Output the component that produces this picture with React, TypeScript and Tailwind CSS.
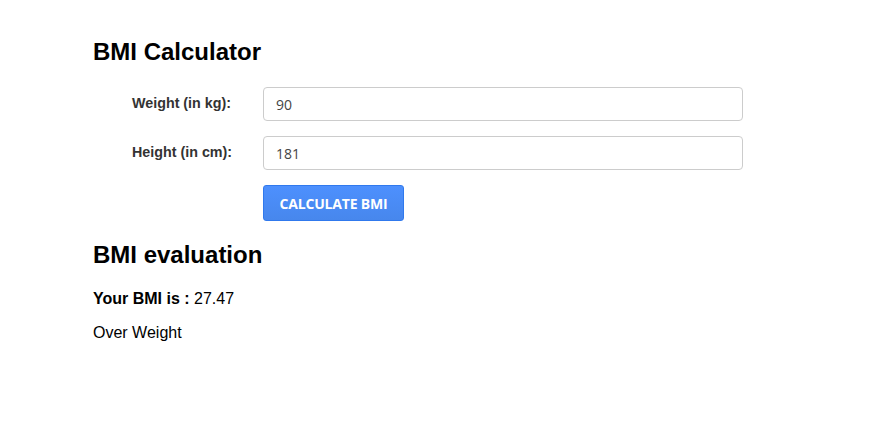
import { useState } from "react";

export default function App() {
  const [weight, setWeight] = useState("90");
  const [height, setHeight] = useState("181");

  return (
    <div className="min-h-[434px] w-full bg-white pl-[93px] pt-[36px] font-['Liberation_Sans',Arial,sans-serif] text-black">
      <h1 className="text-[24px] font-bold leading-[32px]">BMI Calculator</h1>

      <div className="mt-[19px] flex flex-col gap-[15px]">
        <div className="flex items-center">
          <label className="w-[170px] pl-[39px] text-[14.3px] font-bold text-[#333]">Weight (in kg):</label>
          <input
            value={weight}
            onChange={(e) => setWeight(e.target.value)}
            className="h-[34px] w-[480px] rounded-[4px] border border-[#ccc] px-[12px] font-['Open_Sans',sans-serif] text-[14px] text-[#444] outline-none"
          />
        </div>
        <div className="flex items-center">
          <label className="w-[170px] pl-[39px] text-[14.3px] font-bold text-[#333]">Height (in cm):</label>
          <input
            value={height}
            onChange={(e) => setHeight(e.target.value)}
            className="h-[34px] w-[480px] rounded-[4px] border border-[#ccc] px-[12px] font-['Open_Sans',sans-serif] text-[14px] text-[#444] outline-none"
          />
        </div>
        <div className="flex">
          <div className="w-[170px]" />
          <button className="h-[36px] w-[141px] rounded-[3px] border border-[#3079ed] bg-gradient-to-b from-[#4d90fe] to-[#4787ed] font-['Open_Sans',sans-serif] text-[14px] font-bold tracking-[-0.2px] text-white">
            CALCULATE BMI
          </button>
        </div>
      </div>

      <h2 className="mt-[18px] text-[24px] font-bold leading-[32px]">BMI evaluation</h2>
      <p className="mt-[18px] text-[16px] leading-[20px]">
        <span className="font-bold">Your BMI is : </span>27.47
      </p>
      <p className="mt-[14px] text-[16px] leading-[20px]">Over Weight</p>
    </div>
  );
}
